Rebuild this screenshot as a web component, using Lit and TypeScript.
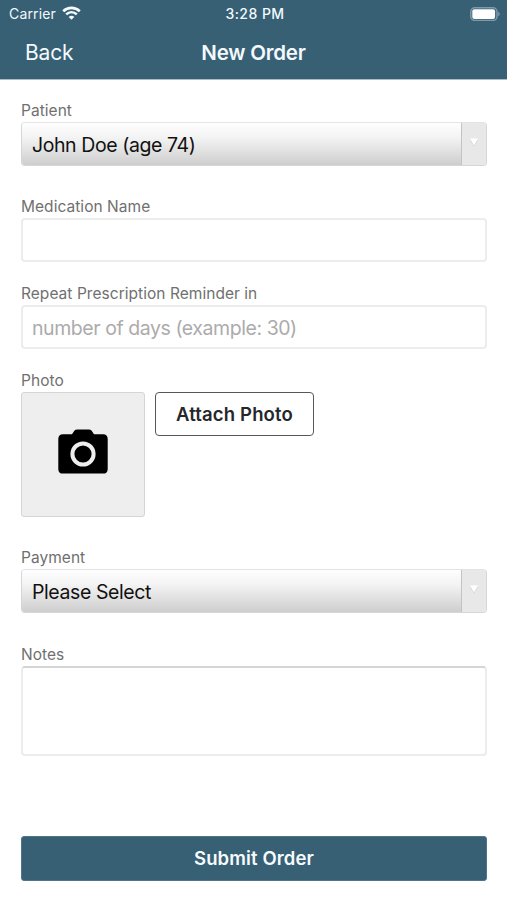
import { LitElement, html, css } from "lit";
import { customElement, property } from "lit/decorators.js";

const font = css`"Inter", "Liberation Sans", sans-serif`;

@customElement("status-bar")
class StatusBar extends LitElement {
  static styles = css`
    :host { display: grid; grid-template-columns: 1fr auto 1fr; align-items: center; height: 27px; padding: 0 7px 0 9px; color: #f3f9fc; font: 400 14px/28px ${font}; }
    .carrier { display: flex; align-items: center; gap: 6px; letter-spacing: 0.16px; }
    .time { font-weight: 500; letter-spacing: 0.45px; padding-left: 1px; }
    .power { justify-self: end; display: block; margin-top: -1px; }
    svg { display: block; }
    .wifi { margin-top: -2px; }
  `;
  render() {
    return html`
      <div class="carrier"><span>Carrier</span>
        <svg class="wifi" width="19" height="14" viewBox="0 0 19 14" fill="none" stroke="#f6fbfd">
          <path d="M1.2 5.2C6 .7 13 .7 17.8 5.2" stroke-width="2.7"/>
          <path d="M4.2 8.4c3.1-2.9 7.5-2.9 10.6 0" stroke-width="2.5"/>
          <path d="M6.7 10.9c1.6-1.5 4-1.5 5.6 0L9.5 13.7z" fill="#f6fbfd" stroke="none"/>
        </svg>
      </div>
      <div class="time">3:28 PM</div>
      <svg class="power" width="30" height="14" viewBox="0 0 30 14">
        <rect x=".8" y=".8" width="26.2" height="12.6" rx="4" fill="none" stroke="#7f9bab" stroke-width="1.5"/>
        <rect x="2.3" y="2.3" width="22.8" height="9.6" rx="2" fill="#fff"/>
        <path d="M28.2 4.8c2 .8 2 3.6 0 4.4z" fill="#7f9bab"/>
      </svg>`;
  }
}

@customElement("select-box")
class SelectBox extends LitElement {
  @property() value = "";
  static styles = css`
    :host { display: flex; box-sizing: border-box; height: 44px; border: 1px solid #d6d6d6; border-top-color: #e3e3e3; border-radius: 4px; overflow: hidden; font: 400 19.5px/44px ${font}; color: #111; }
    .value { flex: 1; padding-left: 10px; background: linear-gradient(#fefefe, #f3f3f3 35%, #cecece); border-right: 1px solid #c3c3c3; letter-spacing: -0.42px; }
    .arrow { width: 24px; background: #e8e8e8; display: flex; justify-content: center; padding-top: 15px; box-sizing: border-box; }
    svg { display: block; }
  `;
  render() {
    return html`<div class="value">${this.value}</div>
      <div class="arrow"><svg width="10" height="9" viewBox="0 0 10 9"><path d="M.8 1.7h8.4L5 8.8z" fill="#d2d2d2"/><path d="M.8.4h8.4L5 7.4z" fill="#fff"/></svg></div>`;
  }
}

@customElement("app-root")
class AppRoot extends LitElement {
  static styles = css`
    :host { display: flex; flex-direction: column; height: 900px; background: #fff; font-family: ${font}; }
    .header { height: 80px; background: #376075; border-bottom: 1px solid #a9bcc6; box-sizing: border-box; }
    .nav { display: grid; grid-template-columns: 1fr auto 1fr; height: 52px; line-height: 52px; padding: 0 25px; color: #f3f9fc; }
    .back { font-size: 21px; letter-spacing: -0.15px; }
    .title { font-size: 20.5px; font-weight: 600; letter-spacing: -0.2px; }
    .form { display: flex; flex-direction: column; padding: 20px 20px 0 21px; }
    .field { display: flex; flex-direction: column; }
    .label { font-size: 15.5px; line-height: 22px; height: 22px; color: #707070; letter-spacing: 0.04px; }
    .gap { margin-bottom: 30px; }
    .near { margin-bottom: 21px; }
    .wide { margin-bottom: 30px; }
    .last { margin-bottom: 31px; }
    .input { height: 44px; box-sizing: border-box; border: 2px solid #ececec; border-radius: 4px; padding-left: 9px; font-size: 19.5px; line-height: 42px; color: #ababab; letter-spacing: -0.44px; }
    .photo { display: flex; gap: 10px; align-items: flex-start; }
    .thumb { width: 124px; height: 125px; box-sizing: border-box; background: #eee; border: 1px solid #d5d5d5; border-radius: 3px; display: flex; justify-content: center; padding-top: 36px; }
    .attach { width: 159px; height: 44px; box-sizing: border-box; border: 1.5px solid #55585b; border-radius: 4px; text-align: center; font-weight: 600; font-size: 18.5px; letter-spacing: 0.15px; line-height: 42px; color: #25282b; }
    .notes { height: 90px; box-sizing: border-box; border: 2px solid #ececec; border-top: 2px solid #d5d5d5; border-radius: 4px; }
    .submit { margin: auto 20px 19px 21px; height: 45px; border-radius: 3px; background: #376075; box-sizing: border-box; border: 1px solid #507489; color: #f6fbfd; text-align: center; font-weight: 600; font-size: 18.5px; letter-spacing: 0.12px; line-height: 43px; }
  `;
  render() {
    return html`
      <div class="header">
        <status-bar></status-bar>
        <div class="nav"><span class="back">Back</span><span class="title">New Order</span></div>
      </div>
      <div class="form">
        <div class="field gap"><div class="label">Patient</div><select-box value="John Doe (age 74)"></select-box></div>
        <div class="field near"><div class="label">Medication Name</div><div class="input"></div></div>
        <div class="field near"><div class="label">Repeat Prescription Reminder in</div><div class="input">number of days (example: 30)</div></div>
        <div class="field wide"><div class="label">Photo</div>
          <div class="photo">
            <div class="thumb"><svg width="50" height="45" viewBox="0 0 50 45">
              <path fill="#000" d="M5 5.300h9l2.300-3.500Q17.500.5 19.200.5h11.600q1.700 0 2.900 1.300L36 5.300h9q4.700 0 4.700 4.700v29.900q0 4.700-4.700 4.700H5q-4.700 0-4.700-4.700V10Q.3 5.300 5 5.300z"/>
              <circle cx="25" cy="25" r="10.600" fill="none" stroke="#eee" stroke-width="4"/>
            </svg></div>
            <div class="attach">Attach Photo</div>
          </div>
        </div>
        <div class="field last"><div class="label">Payment</div><select-box value="Please Select"></select-box></div>
        <div class="field"><div class="label">Notes</div><div class="notes"></div></div>
      </div>
      <div class="submit">Submit Order</div>`;
  }
}
